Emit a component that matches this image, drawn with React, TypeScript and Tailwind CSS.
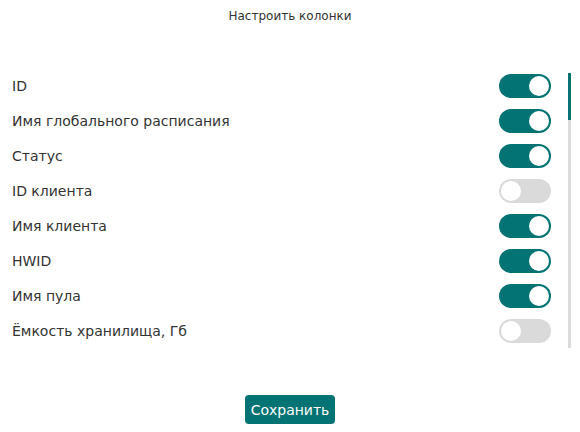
import React, { useState } from "react";

const initialColumns = [
  { id: "id", label: "ID", visible: true },
  { id: "scheduleName", label: "Имя глобального расписания", visible: true },
  { id: "status", label: "Статус", visible: true },
  { id: "clientId", label: "ID клиента", visible: false },
  { id: "clientName", label: "Имя клиента", visible: true },
  { id: "hwid", label: "HWID", visible: true },
  { id: "poolName", label: "Имя пула", visible: true },
  { id: "storage", label: "Ёмкость хранилища, Гб", visible: false },
];

function Toggle({ checked, onChange }: { checked: boolean; onChange: () => void }) {
  return (
    <button
      type="button"
      onClick={onChange}
      className={`flex h-[24px] w-[52px] items-center rounded-full p-[2px] ${
        checked ? "justify-end bg-[#037373]" : "justify-start bg-[#dadada]"
      }`}
    >
      <span className="h-[20px] w-[20px] rounded-full bg-white" />
    </button>
  );
}

export default function App() {
  const [columns, setColumns] = useState(initialColumns);

  const toggle = (id: string) =>
    setColumns((prev) => prev.map((c) => (c.id === id ? { ...c, visible: !c.visible } : c)));

  return (
    <div
      className="flex h-[432px] w-[580px] flex-col bg-white text-[#333333]"
      style={{ fontFamily: '"DejaVu Sans", sans-serif' }}
    >
      <div className="pt-[8px] text-center text-[12px] leading-[16px]">Настроить колонки</div>

      <div className="mt-[44px] flex pl-[12px] pr-[9px]">
        <div className="flex flex-1 flex-col">
          {columns.map((col) => (
            <div key={col.id} className="flex h-[35px] items-center justify-between">
              <span className="pt-[2px] text-[14px]">{col.label}</span>
              <Toggle checked={col.visible} onChange={() => toggle(col.id)} />
            </div>
          ))}
        </div>
        {/* scrollbar */}
        <div className="ml-[17px] mt-[5px] h-[275px] w-[3px] bg-[#dcdcdc]">
          <div className="h-[47px] w-full bg-[#037373]" />
        </div>
      </div>

      <div className="mt-[47px] flex justify-center">
        <button
          type="button"
          className="h-[29px] w-[90px] rounded-[4px] bg-[#037373] pt-[1px] text-[14px] text-white"
        >
          Сохранить
        </button>
      </div>
    </div>
  );
}
